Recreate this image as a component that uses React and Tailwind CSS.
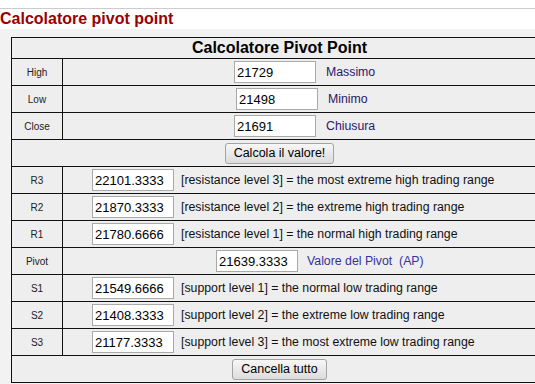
import React from 'react';

const font = "font-['Liberation_Sans',Arial,sans-serif]";

const levels = [
    { label: 'R3', value: '22101.3333', text: '[resistance level 3] = the most extreme high trading range' },
    { label: 'R2', value: '21870.3333', text: '[resistance level 2] = the extreme high trading range' },
    { label: 'R1', value: '21780.6666', text: '[resistance level 1] = the normal high trading range' },
];

const supports = [
    { label: 'S1', value: '21549.6666', text: '[support level 1] = the normal low trading range' },
    { label: 'S2', value: '21408.3333', text: '[support level 2] = the extreme low trading range' },
    { label: 'S3', value: '21177.3333', text: '[support level 3] = the most extreme low trading range' },
];

function Field({ value }) {
    return (
        <input
            type="text"
            defaultValue={value}
            className="w-[82px] h-[22px] border border-[#a9a9a9] bg-white px-[2px] text-[13px] text-black outline-none"
        />
    );
}

function Row({ label, children, className = '' }) {
    return (
        <div className="flex h-[27px] border-b border-[#111]">
            <div className="w-[51px] shrink-0 border-r border-[#111] flex items-center justify-center text-[10px] text-[#222]">
                {label}
            </div>
            <div className={`flex-1 flex items-center ${className}`}>{children}</div>
        </div>
    );
}

function Button({ children }) {
    return (
        <button className="h-[21px] px-[8px] border border-[#a3a3a3] rounded-[3px] bg-gradient-to-b from-[#f7f7f7] to-[#dcdcdc] text-[12.5px] text-black leading-none">
            {children}
        </button>
    );
}

export default function App() {
    return (
        <div className={`w-[535px] h-[384px] overflow-hidden bg-white ${font}`}>
            <div className="h-[8px]" />
            <div className="border-t border-[#cccccc]" />
            <h1 className="h-[20px] leading-[20px] text-[16px] font-bold text-[#990000]">Calcolatore pivot point</h1>

            <div className="bg-[#f2f2f2] pl-[11px] pt-[8px] h-[400px]">
                <div className="w-[536px] border-t border-l border-[#111] bg-[#eeeeee]">
                    <div className="h-[21px] border-b border-[#111] flex items-center justify-center text-[16px] font-bold text-black leading-[20px]">
                        Calcolatore Pivot Point
                    </div>

                    <Row label="High" className="pl-[171px]">
                        <Field value="21729" />
                        <span className="ml-[10px] text-[12.3px] text-[#2a1766]">Massimo</span>
                    </Row>
                    <Row label="Low" className="pl-[173px]">
                        <Field value="21498" />
                        <span className="ml-[10px] text-[12.3px] text-[#2a1766]">Minimo</span>
                    </Row>
                    <Row label="Close" className="pl-[171px]">
                        <Field value="21691" />
                        <span className="ml-[10px] text-[12.3px] text-[#2a1766]">Chiusura</span>
                    </Row>

                    <div className="h-[27px] border-b border-[#111] flex items-center justify-center">
                        <Button>Calcola il valore!</Button>
                    </div>

                    {levels.map(l => (
                        <Row key={l.label} label={l.label} className="pl-[29px]">
                            <Field value={l.value} />
                            <span className="ml-[7px] text-[12.3px] text-[#111]">{l.text}</span>
                        </Row>
                    ))}

                    <Row label="Pivot" className="pl-[153px]">
                        <Field value="21639.3333" />
                        <span className="ml-[9px] text-[12.3px] text-[#333399] whitespace-pre">Valore del Pivot  (AP)</span>
                    </Row>

                    {supports.map(s => (
                        <Row key={s.label} label={s.label} className="pl-[29px]">
                            <Field value={s.value} />
                            <span className="ml-[7px] text-[12.3px] text-[#111]">{s.text}</span>
                        </Row>
                    ))}

                    <div className="h-[27px] border-b border-[#111] flex items-center justify-center">
                        <Button>Cancella tutto</Button>
                    </div>
                </div>
            </div>
        </div>
    );
}
